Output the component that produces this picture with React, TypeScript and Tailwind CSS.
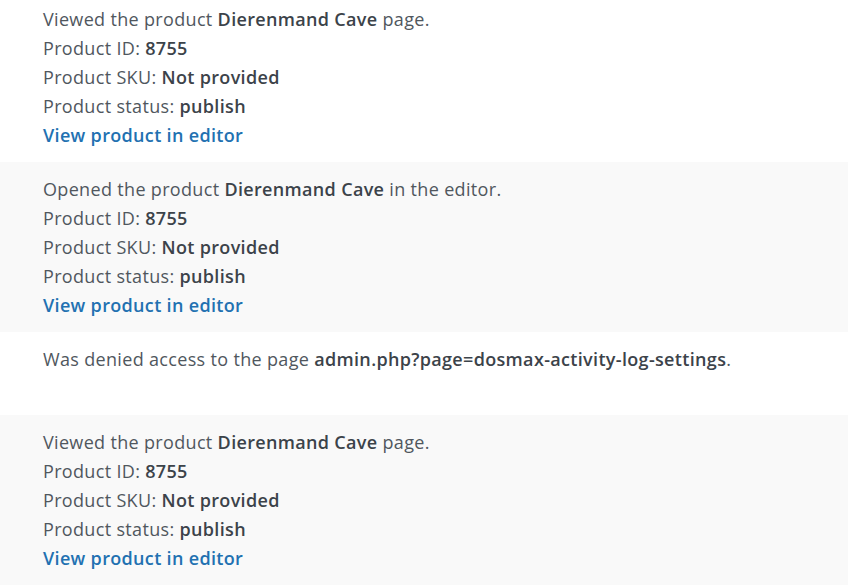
import React from "react";

const font = { fontFamily: '"Open Sans", "Noto Sans", sans-serif' };

function ProductEntry({ verb, tail, bg }: { verb: string; tail: string; bg: string }) {
  return (
    <div className={`${bg} pl-[43px] pr-4 pt-[13px] pb-[12px] text-[18px] leading-[29px] tracking-[0.33px] text-[#50575e]`}>
      <div>
        {verb} the product <strong className="font-semibold text-[#3c434a]">Dierenmand Cave</strong> {tail}
      </div>
      <div>
        Product ID: <strong className="font-semibold text-[#3c434a]">8755</strong>
      </div>
      <div>
        Product SKU: <strong className="font-semibold text-[#3c434a]">Not provided</strong>
      </div>
      <div>
        Product status: <strong className="font-semibold text-[#3c434a]">publish</strong>
      </div>
      <div>
        <a href="#" className="font-semibold text-[#2271b1]">View product in editor</a>
      </div>
    </div>
  );
}

export default function App() {
  return (
    <div style={font} className="w-[848px] h-[588px] overflow-hidden bg-white">
      <div className="-mt-[8px]">
        <ProductEntry verb="Viewed" tail="page." bg="bg-white" />
      </div>
      <ProductEntry verb="Opened" tail="in the editor." bg="bg-[#f9f9f9]" />
      <div className="bg-white pl-[43px] pr-4 pt-[13px] pb-[12px] text-[18px] leading-[29px] tracking-[0.33px] text-[#50575e] h-[83px]">
        Was denied access to the page{" "}
        <strong className="font-semibold text-[#3c434a]">admin.php?page=dosmax-activity-log-settings</strong>.
      </div>
      <ProductEntry verb="Viewed" tail="page." bg="bg-[#f9f9f9]" />
    </div>
  );
}
